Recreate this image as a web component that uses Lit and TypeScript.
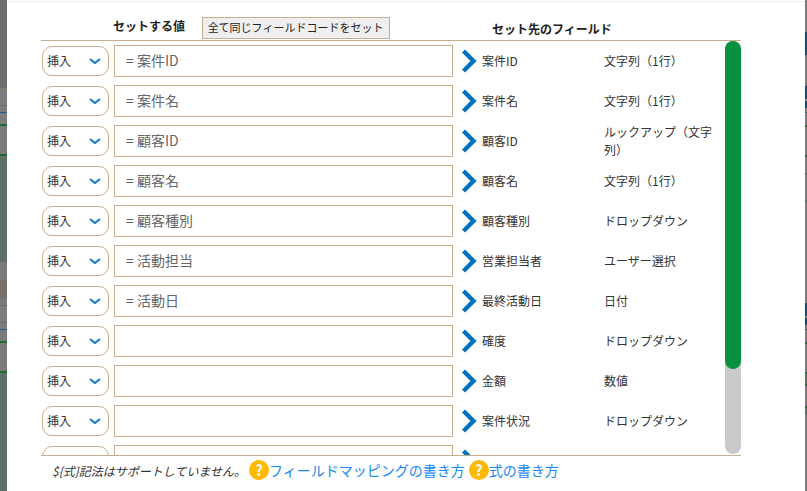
import { LitElement, html, css, svg } from "lit";
import { customElement } from "lit/decorators.js";

interface MappingRow {
  value: string;
  field: string;
  type: string;
}

const ROWS: MappingRow[] = [
  { value: "= 案件ID", field: "案件ID", type: "文字列（1行）" },
  { value: "= 案件名", field: "案件名", type: "文字列（1行）" },
  { value: "= 顧客ID", field: "顧客ID", type: "ルックアップ（文字列）" },
  { value: "= 顧客名", field: "顧客名", type: "文字列（1行）" },
  { value: "= 顧客種別", field: "顧客種別", type: "ドロップダウン" },
  { value: "= 活動担当", field: "営業担当者", type: "ユーザー選択" },
  { value: "= 活動日", field: "最終活動日", type: "日付" },
  { value: "", field: "確度", type: "ドロップダウン" },
  { value: "", field: "金額", type: "数値" },
  { value: "", field: "案件状況", type: "ドロップダウン" },
  { value: "", field: "", type: "" },
];

const selectArrow = svg`<polyline points="1,1 6,5 11,1" fill="none" stroke="#0c7cc4" stroke-width="2"></polyline>`;
const chevron = svg`<polyline points="1.5,2 11.5,12 1.5,22" fill="none" stroke="#0073bd" stroke-width="4.4"></polyline>`;

@customElement("app-root")
export class AppRoot extends LitElement {
  private renderRow(row: MappingRow) {
    // the last row is cut off by the list, only its top edge shows
    return html`
      <div class="row">
        <div class="select">
          <span>${row.field ? "挿入" : ""}</span>
          <svg width="12" height="6" viewBox="0 0 12 6">${selectArrow}</svg>
        </div>
        <div class="value">${row.value}</div>
        <svg class="chevron" width="16" height="24" viewBox="0 0 16 24">${chevron}</svg>
        <div class="field">${row.field}</div>
        <div class="type">${row.type}</div>
      </div>
    `;
  }

  private renderHelp(label: string) {
    return html`<span class="help">?</span><a class="link">${label}</a>`;
  }

  render() {
    return html`
      <div class="strip left"></div>
      <main class="modal">
        <header class="head">
          <span class="head-value">セットする値</span>
          <button class="set-all">全て同じフィールドコードをセット</button>
          <span class="head-field">セット先のフィールド</span>
        </header>
        <section class="list">
          ${ROWS.map((r) => this.renderRow(r))}
          <div class="scrollbar"><div class="thumb"></div></div>
        </section>
        <footer class="foot">
          <span class="note">$\{式}記法はサポートしていません。</span>
          ${this.renderHelp("フィールドマッピングの書き方")}
          ${this.renderHelp("式の書き方")}
        </footer>
      </main>
      <div class="strip right"></div>
    `;
  }

  static styles = css`
    :host {
      display: grid;
      grid-template-columns: 7px 798px 2px;
      height: 491px;
      overflow: hidden;
      font-family: "Noto Sans CJK JP", "Noto Sans", sans-serif;
      color: #333;
    }
    .strip.left {
      background: linear-gradient(
        to bottom,
        #6f6d6a 0 88px,
        #8a7862 88px 89px,
        #7d7d7d 89px 105px,
        #77695c 105px 106px,
        #7d7d7d 106px 112px,
        #1d5d86 112px 113px,
        #7d7d7d 113px 124px,
        #1c6a36 124px 126px,
        #7b7b7b 126px 154px,
        #1c6a36 154px 156px,
        #5f7066 156px 262px,
        #7a7a7a 262px 280px,
        #76706a 280px 298px,
        #7a7a7a 298px 305px,
        #77695c 305px 306px,
        #7d7d7d 306px 322px,
        #77695c 322px 323px,
        #7d7d7d 323px 329px,
        #1d5d86 329px 330px,
        #7b7b7b 330px 341px,
        #1c6a36 341px 343px,
        #7b7b7b 343px 371px,
        #1c6a36 371px 373px,
        #5f7066 373px 491px
      );
    }
    .strip.right {
      background: linear-gradient(
        to bottom,
        #7c7c7c 0 32px,
        #0e4a75 32px 55px,
        #7c7c7c 55px 86px,
        #0e4a75 86px 99px,
        #8a8a9a 99px 101px,
        #0e4a75 101px 108px,
        #7c7c7c 108px 112px,
        #1d5d86 112px 113px,
        #7c7c7c 113px 125px,
        #1c6a36 125px 127px,
        #7c7c7c 127px 155px,
        #1c6a36 155px 157px,
        #7c7c7c 157px 173px,
        #4d7565 173px 175px,
        #7c7c7c 175px 200px,
        #4d7565 200px 202px,
        #7c7c7c 202px 303px,
        #0e4a75 303px 316px,
        #8a8a9a 316px 318px,
        #0e4a75 318px 325px,
        #7c7c7c 325px 329px,
        #1d5d86 329px 330px,
        #7c7c7c 330px 342px,
        #1c6a36 342px 344px,
        #7c7c7c 344px 372px,
        #1c6a36 372px 374px,
        #5f7066 374px 384px,
        #1c6a36 384px 386px,
        #7c7c7c 386px 406px,
        #1c6a36 406px 408px,
        #5f7066 408px 415px,
        #7c7c7c 415px 491px
      );
    }
    .modal {
      background: #fff;
      margin-top: 1px;
      border-top: 1px solid #ececec;
      padding-left: 34px;
    }
    .head {
      height: 38px;
      display: flex;
      align-items: flex-end;
      width: 700px;
      font-size: 12px;
      font-weight: 700;
      color: #222;
    }
    .head-value {
      margin-left: 72px;
      margin-bottom: 5px;
      line-height: 18px;
    }
    .set-all {
      margin: 0 0 1px 17px;
      width: 188px;
      height: 22px;
      padding: 0 1px 2px 0;
      box-sizing: border-box;
      border: 1px solid #c8ad8e;
      background: #efefef;
      font: 400 11px/18px "Noto Sans CJK JP", sans-serif;
      color: #222;
    }
    .head-field {
      margin-left: 102px;
      margin-bottom: 2px;
      line-height: 18px;
    }
    .list {
      position: relative;
      width: 700px;
      height: 416px;
      overflow: hidden;
      border-top: 1px solid #c8ad8e;
      border-bottom: 1px solid #c8ad8e;
      box-sizing: border-box;
      padding-top: 4px;
    }
    .row {
      display: flex;
      align-items: center;
      height: 32px;
      margin-bottom: 8px;
    }
    .select {
      width: 67px;
      height: 30px;
      margin-left: 1px;
      box-sizing: border-box;
      border: 1px solid #c8ad8e;
      border-radius: 10px;
      display: flex;
      align-items: center;
      justify-content: space-between;
      padding: 0 7px 0 4px;
      font-size: 12px;
      line-height: 26px;
    }
    .value {
      width: 339px;
      height: 32px;
      margin-left: 5px;
      box-sizing: border-box;
      border: 1px solid #c8ad8e;
      padding-left: 11px;
      font-size: 14px;
      line-height: 29px;
      color: #666;
    }
    .chevron {
      margin-left: 9px;
      flex: none;
    }
    .field {
      width: 122px;
      margin-left: 4px;
      font-size: 12px;
      line-height: 18px;
    }
    .type {
      width: 115px;
      font-size: 12px;
      line-height: 18px;
    }
    .scrollbar {
      position: absolute;
      top: 0;
      right: 0;
      width: 16px;
      height: 413px;
      border-radius: 8px;
      background: #cacaca;
    }
    .thumb {
      height: 328px;
      border-radius: 8px;
      background: #08913f;
    }
    .foot {
      display: flex;
      align-items: center;
      height: 28px;
      margin-left: 11px;
      font-size: 12px;
    }
    .note {
      font-style: italic;
      width: 197px;
      flex: none;
    }
    .help {
      width: 20px;
      height: 20px;
      flex: none;
      border-radius: 50%;
      background: #ffb900;
      color: #fff;
      font-size: 15px;
      font-weight: 700;
      line-height: 20px;
      text-align: center;
    }
    .link {
      color: #1a86f0;
      font-size: 14px;
      margin-right: 4px;
    }
  `;
}

declare global {
  interface HTMLElementTagNameMap {
    "app-root": AppRoot;
  }
}
